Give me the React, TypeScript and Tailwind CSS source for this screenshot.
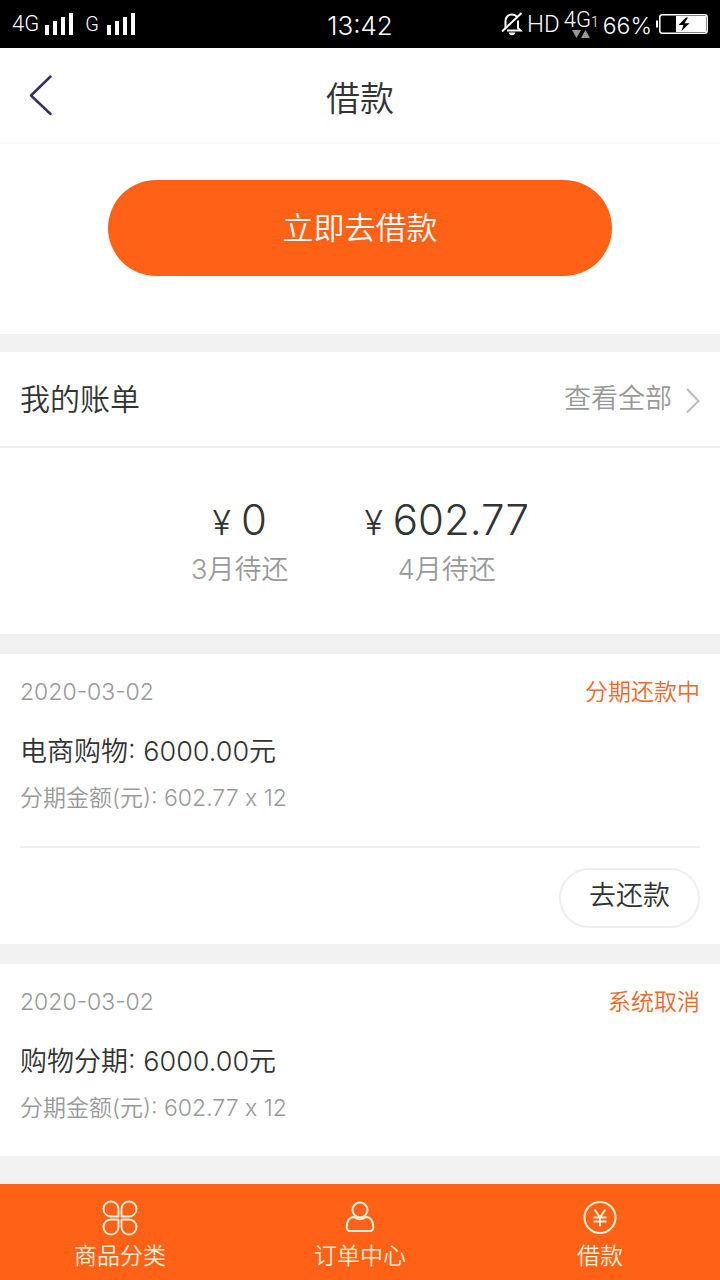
import type { ReactNode } from "react";

type Order = {
	id: number;
	date: string;
	status: string;
	title: string;
	amount: string;
	plan: string;
	payable: boolean;
};

const bills = [
	{ label: "3月待还", amount: "0" },
	{ label: "4月待还", amount: "602.77" },
];

const orders: Order[] = [
	{
		id: 1,
		date: "2020-03-02",
		status: "分期还款中",
		title: "电商购物",
		amount: "6000.00元",
		plan: "602.77 x 12",
		payable: true,
	},
	{
		id: 2,
		date: "2020-03-02",
		status: "系统取消",
		title: "购物分期",
		amount: "6000.00元",
		plan: "602.77 x 12",
		payable: false,
	},
];

const Signal: React.FC = () => (
	<svg width="28" height="22" viewBox="0 0 28 22" fill="currentColor">
		<rect x="0" y="12" width="4" height="10" />
		<rect x="8" y="8" width="4" height="14" />
		<rect x="16" y="4" width="4" height="18" />
		<rect x="24" y="0" width="4" height="22" />
	</svg>
);

const BellOff: React.FC = () => (
	<svg
		width="22"
		height="24"
		viewBox="0 0 22 24"
		fill="none"
		stroke="currentColor"
		strokeWidth="2"
	>
		<path d="M4.5 16V9C4.5 5 7.5 2.5 11 2.5c2 0 3.8.8 5 2.2M17 8.5V16l2.5 2.5H6" />
		<path d="M1 19.5 20.5 1" />
		<path d="M7.5 20.5h7c-.5 1.6-1.7 2.8-3.5 2.8s-3-1.2-3.5-2.8Z" fill="currentColor" stroke="none" />
	</svg>
);

const Battery: React.FC = () => (
	<svg width="52" height="20" viewBox="0 0 52 20" fill="none">
		<path d="M1 6.5v7" stroke="white" strokeWidth="2" />
		<rect x="3.8" y="0.8" width="47.4" height="18.4" rx="2.5" stroke="white" strokeWidth="1.5" />
		<rect x="20" y="2" width="30" height="16" fill="white" />
		<path d="M30 3.5 22.5 11h5l-2 6 8-7.8h-5l3.5-5.7Z" fill="black" />
	</svg>
);

const StatusBar: React.FC = () => (
	<div className="grid h-12 grid-cols-[1fr_auto_1fr] items-center bg-black px-3 text-white">
		<div className="flex items-center font-['Roboto',sans-serif] text-[22px] leading-none">
			<span className="mr-1.5">4G</span>
			<Signal />
			<span className="ml-3 mr-2 text-xl">G</span>
			<Signal />
		</div>
		<span className="pt-1 text-[26px] leading-8">13:42</span>
		<div className="flex items-center justify-end gap-1">
			<BellOff />
			<span className="font-['Roboto',sans-serif] text-2xl leading-none">HD</span>
			<div className="flex flex-col items-center">
				<span className="flex items-baseline font-['Roboto',sans-serif] text-[22px] leading-5">
					4G<span className="text-sm leading-none">1</span>
				</span>
				<svg width="18" height="8" viewBox="0 0 18 8" fill="#999">
					<path d="M0 0h9L4.5 8ZM9 8h9L13.5 0Z" />
				</svg>
			</div>
			<span className="pt-1 text-[23px] leading-none">66%</span>
			<Battery />
		</div>
	</div>
);

const Header: React.FC = () => (
	<header className="grid h-24 grid-cols-[1fr_auto_1fr] items-center border-b-2 border-[#f8f8f8] bg-white px-7">
		<button type="button" aria-label="返回" className="w-fit text-[#37305f]">
			<svg
				width="26"
				height="42"
				viewBox="0 0 26 42"
				fill="none"
				stroke="currentColor"
				strokeWidth="2.5"
				strokeLinecap="round"
				strokeLinejoin="round"
			>
				<path d="M22.5 2.5 3 21.5l19.5 18.5" />
			</svg>
		</button>
		<h1 className="pt-2 text-[34px] leading-10">借款</h1>
	</header>
);

const OrderCard: React.FC<{ order: Order }> = ({ order }) => (
	<article className="mt-5 bg-white px-5">
		<div className="flex items-center justify-between pt-5 text-[23px] leading-9">
			<time className="text-[#999]">{order.date}</time>
			<span className="text-[#e96a2b]">{order.status}</span>
		</div>
		<h3 className="mt-5 text-[27px] leading-11">
			{order.title}: {order.amount}
		</h3>
		<p className="mt-2 text-[23px] leading-8 text-[#999]">
			分期金额(元): {order.plan}
		</p>
		{order.payable ? (
			<div className="mt-8 flex justify-end border-t-2 border-[#f0f0f0] pt-5 pb-4">
				<button
					type="button"
					className="h-15 rounded-full border-2 border-[#eee] px-7 pb-1 text-[27px]"
				>
					去还款
				</button>
			</div>
		) : (
			<div className="h-8" />
		)}
	</article>
);

const NavItem: React.FC<{ label: string; children: ReactNode }> = ({
	label,
	children,
}) => (
	<a href="#" className="flex flex-1 flex-col items-center pt-4">
		<svg
			width="36"
			height="36"
			viewBox="0 0 36 36"
			fill="none"
			stroke="currentColor"
			strokeWidth="2"
			strokeLinejoin="round"
		>
			{children}
		</svg>
		<span className="mt-1 text-[23px] leading-8">{label}</span>
	</a>
);

const App: React.FC = () => {
	return (
		<div className="flex min-h-screen flex-col bg-[#f2f2f2] font-['Inter','Noto_Sans_CJK_SC',sans-serif] font-[350] text-[#333]">
			<StatusBar />
			<Header />

			<main className="flex-1">
				<section className="bg-white px-[15%] pt-9 pb-[58px]">
					<button
						type="button"
						className="h-24 w-full rounded-full bg-[#ff6116] text-[31px] text-white"
					>
						立即去借款
					</button>
				</section>

				<section className="mt-[18px] bg-white">
					<div className="flex h-24 items-center justify-between border-b-2 border-[#f0f0f0] px-5">
						<h2 className="text-[30px]">我的账单</h2>
						<a href="#" className="flex items-center gap-3.5 text-[27px] text-[#999]">
							查看全部
							<svg
								width="14"
								height="28"
								viewBox="0 0 14 28"
								fill="none"
								stroke="#bbb"
								strokeWidth="2"
							>
								<path d="M1 4l11.5 12L1 27.5" />
							</svg>
						</a>
					</div>
					<div className="flex justify-center gap-19 pt-12 pb-11">
						{bills.map((bill) => (
							<div key={bill.label} className="text-center">
								<p className="flex items-baseline justify-center gap-2.5 text-[42px] leading-12 font-light">
									<span className="text-[34px] leading-none">¥</span>
									{bill.amount}
								</p>
								<p className="mt-1.5 text-[27px] leading-10 text-[#999]">{bill.label}</p>
							</div>
						))}
					</div>
				</section>

				{orders.map((order) => (
					<OrderCard key={order.id} order={order} />
				))}
			</main>

			<nav className="sticky bottom-0 flex h-24 bg-[#ff6116] text-[#fff0d8]">
				<NavItem label="商品分类">
					<path
						strokeWidth="1.9"
						d="M16.5 16.5H9a7.5 7.5 0 1 1 7.5-7.5ZM19.5 16.5V9a7.5 7.5 0 1 1 7.5 7.5ZM16.5 19.5V27a7.5 7.5 0 1 1-7.5-7.5ZM19.5 19.5H27a7.5 7.5 0 1 1-7.5 7.5Z"
					/>
				</NavItem>
				<NavItem label="订单中心">
					<circle cx="18" cy="10" r="7.5" />
					<path d="M12 17c-4.500 0-7.300 4.200-7.300 10 0 3 1 4 3.500 4h19.600c2.500 0 3.500-1 3.500-4 0-5.800-2.800-10-7.300-10-3.500 3-8.500 3-12 0Z" />
				</NavItem>
				<NavItem label="借款">
					<circle cx="18" cy="17.5" r="15.5" />
					<path
						strokeWidth="2"
						d="M12.5 9.5l5.500 8 5.500-8M18 17.5V26.500M11.500 17.500h13M11.500 21.500h13"
					/>
				</NavItem>
			</nav>
		</div>
	);
};

export default App;
